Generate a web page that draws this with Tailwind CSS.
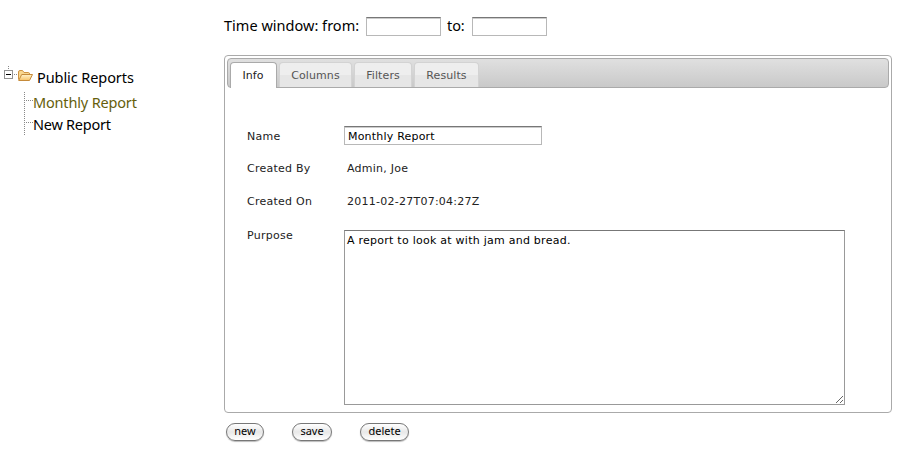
<!DOCTYPE html>
<html lang="en">
<head>
<meta charset="utf-8">
<title>Reports</title>
<script src="https://cdn.jsdelivr.net/npm/@tailwindcss/browser@4"></script>
</head>
<body class="flex h-[457px] w-[914px] overflow-hidden bg-white font-['Noto_Sans',sans-serif] text-[14.5px] tracking-[-0.1px] text-black">
<nav class="w-[224px] shrink-0 pt-[66px]">
  <div class="flex h-[22px] items-start">
    <svg class="h-[22px] w-[34px] shrink-0" viewBox="0 0 34 22" fill="none">
      <defs><linearGradient id="folder" x1="0" y1="0" x2="0" y2="1"><stop stop-color="#fff3cb"/><stop offset="1" stop-color="#f7c268"/></linearGradient></defs>
      <path d="M8.5 0V4M14 8.5H18" stroke="#888" stroke-dasharray="1 1"/>
      <rect x="4.500" y="4.500" width="8" height="8" fill="#fff" stroke="#929292"/>
      <path d="M6 8.500H11" stroke="#000"/>
      <path d="M18.500 13.500V6Q18.500 4.500 20 4.500H22.500L24 6.500H28.500Q29.500 6.500 29.500 8V9" fill="#f9d78f" stroke="#cf9443"/>
      <path d="M18.700 14.500L21.700 8.500H32.500L29.500 14.500Z" fill="url(#folder)" stroke="#c58a3a" stroke-linejoin="round"/>
    </svg>
    <span class="ml-[3px] whitespace-nowrap leading-[22px] tracking-[-0.08px]">Public Reports</span>
  </div>
  <ul class="ml-[24px] mt-[4px] h-[43px] bg-[repeating-linear-gradient(to_bottom,#888_0_1px,transparent_1px_2px)] bg-[length:1px_100%] bg-no-repeat">
    <li class="flex h-[22px]"><svg class="h-[12px] w-[9px] shrink-0" viewBox="0 0 9 12"><path d="M0 8.500H9" stroke="#888" stroke-dasharray="1 1"/></svg><span class="-mt-px whitespace-nowrap leading-[22px] tracking-[-0.17px] text-[#665e0c]">Monthly Report</span></li>
    <li class="flex h-[22px]"><svg class="h-[12px] w-[9px] shrink-0" viewBox="0 0 9 12"><path d="M0 8.500H9" stroke="#888" stroke-dasharray="1 1"/></svg><span class="-mt-px whitespace-nowrap leading-[22px] tracking-[-0.25px]">New Report</span></li>
  </ul>
</nav>
<main class="w-[668px] pt-[15px]">
  <form class="flex h-[40px] items-start whitespace-nowrap leading-[20px]">
    <label class="w-[142px] tracking-[0.02px]">Time window: from:</label>
    <input aria-label="From" class="mt-[2px] h-[19px] w-[75px] border border-[#b8b8b8] border-t-[#777] bg-white shadow-[inset_0_1px_0_#ccc]">
    <label class="ml-[6px] w-[25px]">to:</label>
    <input aria-label="To" class="mt-[2px] h-[19px] w-[75px] border border-[#b8b8b8] border-t-[#777] bg-white shadow-[inset_0_1px_0_#ccc]">
  </form>
  <section class="h-[358px] rounded-[4px] border border-[#aaa] p-[2px] font-['DejaVu_Sans',sans-serif] text-[11px] tracking-[0.25px] text-[#222]">
    <div class="flex h-[30px] items-end gap-[2px] rounded-[4px] border border-[#aaa] bg-linear-to-b from-[#e0e0e0] to-[#c9c9c9] pl-[2px] tracking-[0.1px] text-[#555]">
      <div class="-mb-px flex h-[26px] w-[47px] items-center justify-center rounded-t-[4px] border border-b-0 border-[#aaa] bg-white pr-px pt-px text-[#212121]">Info</div>
      <div class="flex h-[25px] w-[73px] items-center justify-center rounded-t-[4px] border border-b-0 border-[#d3d3d3] bg-linear-to-b from-[#eeeeee] from-50% to-[#e6e6e6] to-50% pt-[2px]">Columns</div>
      <div class="flex h-[25px] w-[58px] items-center justify-center rounded-t-[4px] border border-b-0 border-[#d3d3d3] bg-linear-to-b from-[#eeeeee] from-50% to-[#e6e6e6] to-50% pt-[2px]">Filters</div>
      <div class="flex h-[25px] w-[65px] items-center justify-center rounded-t-[4px] border border-b-0 border-[#d3d3d3] bg-linear-to-b from-[#eeeeee] from-50% to-[#e6e6e6] to-50% pt-[2px]">Results</div>
    </div>
    <div class="grid grid-cols-[97px_501px] grid-rows-[33px_33px_38px_175px] pl-[20px] pt-[38px] leading-[20px]">
      <label class="pt-px">Name</label>
      <input aria-label="Name" value="Monthly Report" class="h-[19px] w-[198px] border border-[#b8b8b8] border-t-[#777] bg-white px-[3px] pt-[2px] tracking-[0.2px] text-black shadow-[inset_0_1px_0_#ccc]">
      <div>Created By</div><div class="pl-[3px]">Admin, Joe</div>
      <div>Created On</div><div class="pl-[3px]">2011-02-27T07:04:27Z</div>
      <label class="-mt-[4px]">Purpose</label>
      <textarea aria-label="Purpose" class="h-[175px] w-[501px] resize border border-[#999] border-t-[#777] bg-white px-[2px] pt-[3px] leading-[14px] tracking-[0.25px] text-black">A report to look at with jam and bread.</textarea>
    </div>
  </section>
  <div class="flex pl-[2px] pt-[10px] text-[11px]">
    <button class="h-[18px] w-[38px] rounded-full border border-[#777] bg-linear-to-b from-white via-[#e8e8e8] to-white pb-[2px] leading-[14px] tracking-normal shadow-[0_1px_1px_#bbb]">new</button>
    <button class="ml-[28px] h-[18px] w-[40px] rounded-full border border-[#777] bg-linear-to-b from-white via-[#e8e8e8] to-white pb-[2px] leading-[14px] tracking-normal shadow-[0_1px_1px_#bbb]">save</button>
    <button class="ml-[28px] h-[18px] w-[49px] rounded-full border border-[#777] bg-linear-to-b from-white via-[#e8e8e8] to-white pb-[2px] leading-[14px] tracking-normal shadow-[0_1px_1px_#bbb]">delete</button>
  </div>
</main>
</body>
</html>
